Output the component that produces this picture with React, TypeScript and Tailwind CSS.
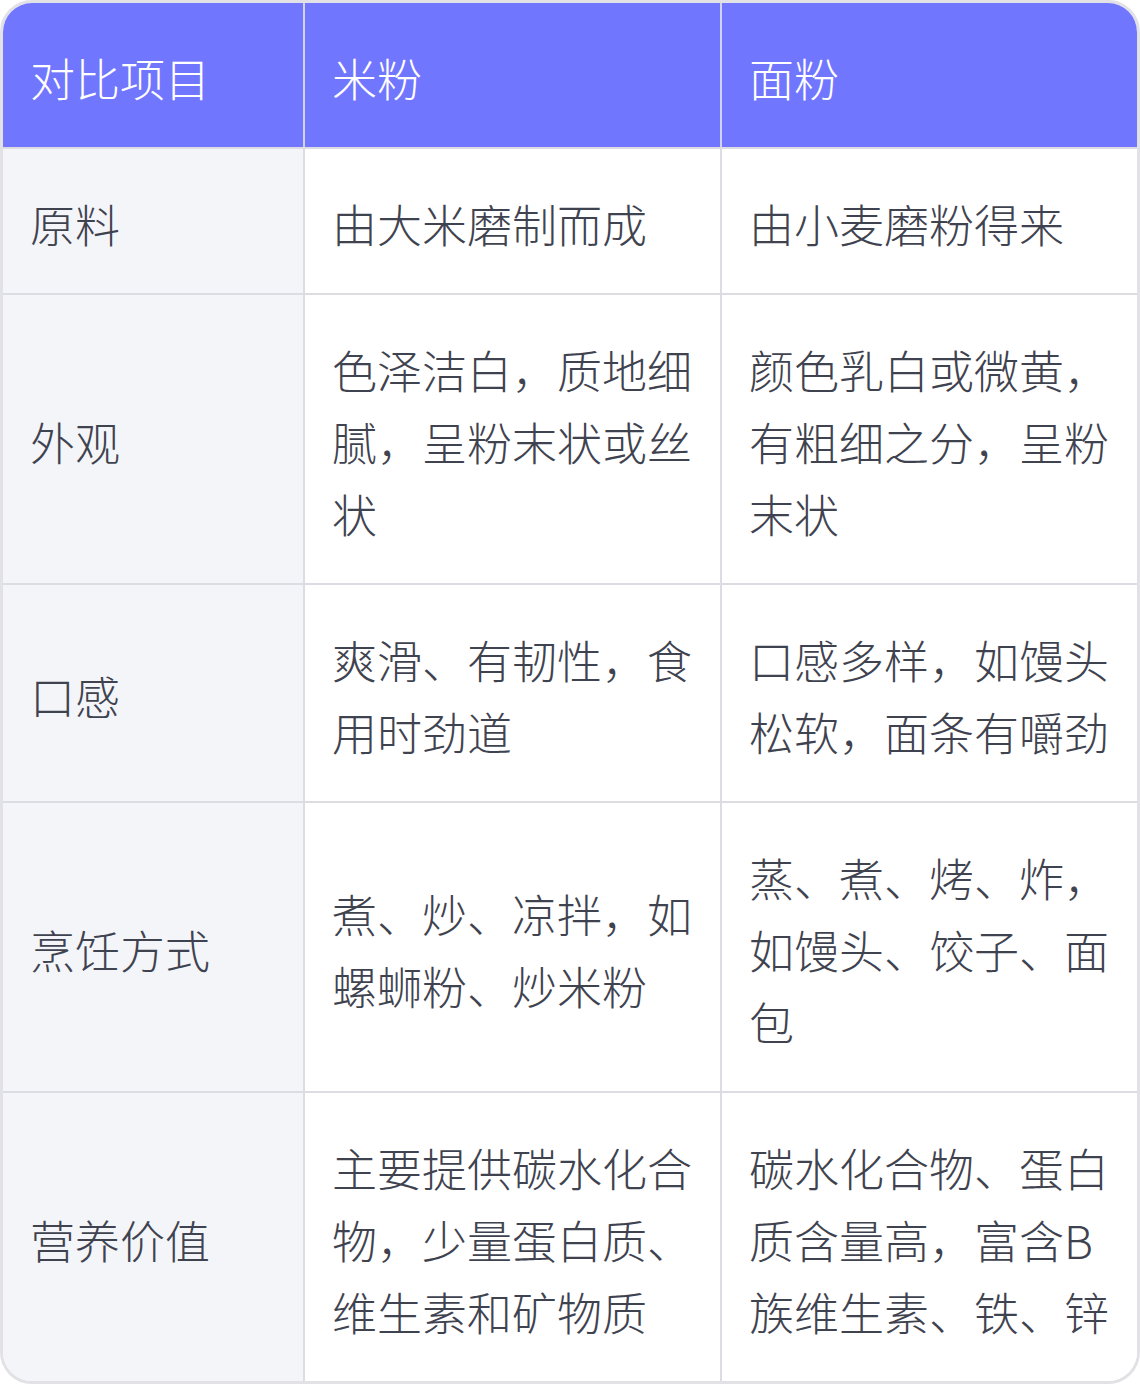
import React from "react";

const rows: [string, string, string][] = [
  ["原料", "由大米磨制而成", "由小麦磨粉得来"],
  ["外观", "色泽洁白，质地细腻，呈粉末状或丝状", "颜色乳白或微黄，有粗细之分，呈粉末状"],
  ["口感", "爽滑、有韧性，食用时劲道", "口感多样，如馒头松软，面条有嚼劲"],
  ["烹饪方式", "煮、炒、凉拌，如螺蛳粉、炒米粉", "蒸、煮、烤、炸，如馒头、饺子、面包"],
  ["营养价值", "主要提供碳水化合物，少量蛋白质、维生素和矿物质", "碳水化合物、蛋白质含量高，富含B族维生素、铁、锌"],
];

export default function App() {
  return (
    <div className="w-[1140px] h-[1384px] bg-white">
      <div
        className="w-[1140px] border-[3px] border-[#e1e1e6] rounded-[32px] overflow-hidden text-[45px] leading-[72px] font-light text-[#3f4350]"
        style={{ fontFamily: '"Noto Sans CJK SC", "Noto Sans", sans-serif' }}
      >
        <div className="grid grid-cols-[302px_417px_415px] bg-[#7176ff] text-white border-b-2 border-[#dcdce2]">
          <div className="px-[27px] pt-[39px] pb-[33px] border-r-2 border-[#d2d3e8]">对比项目</div>
          <div className="px-[27px] pt-[39px] pb-[33px] border-r-2 border-[#d2d3e8]">米粉</div>
          <div className="px-[27px] pt-[39px] pb-[33px]">面粉</div>
        </div>
        {rows.map((r, i) => (
          <div
            key={i}
            className={
              i < rows.length - 1
                ? "grid grid-cols-[302px_417px_415px] border-b-2 border-[#dcdce2]"
                : "grid grid-cols-[302px_417px_415px]"
            }
          >
            <div className="px-[27px] pt-[39px] pb-[33px] border-r-2 border-[#dcdce2] bg-[#f4f5f9] flex items-center">
              {r[0]}
            </div>
            <div className="px-[27px] pt-[39px] pb-[33px] border-r-2 border-[#dcdce2] bg-white flex items-center">
              <span>{r[1]}</span>
            </div>
            <div className="px-[27px] pt-[39px] pb-[33px] bg-white flex items-center">
              <span>{r[2]}</span>
            </div>
          </div>
        ))}
      </div>
    </div>
  );
}
